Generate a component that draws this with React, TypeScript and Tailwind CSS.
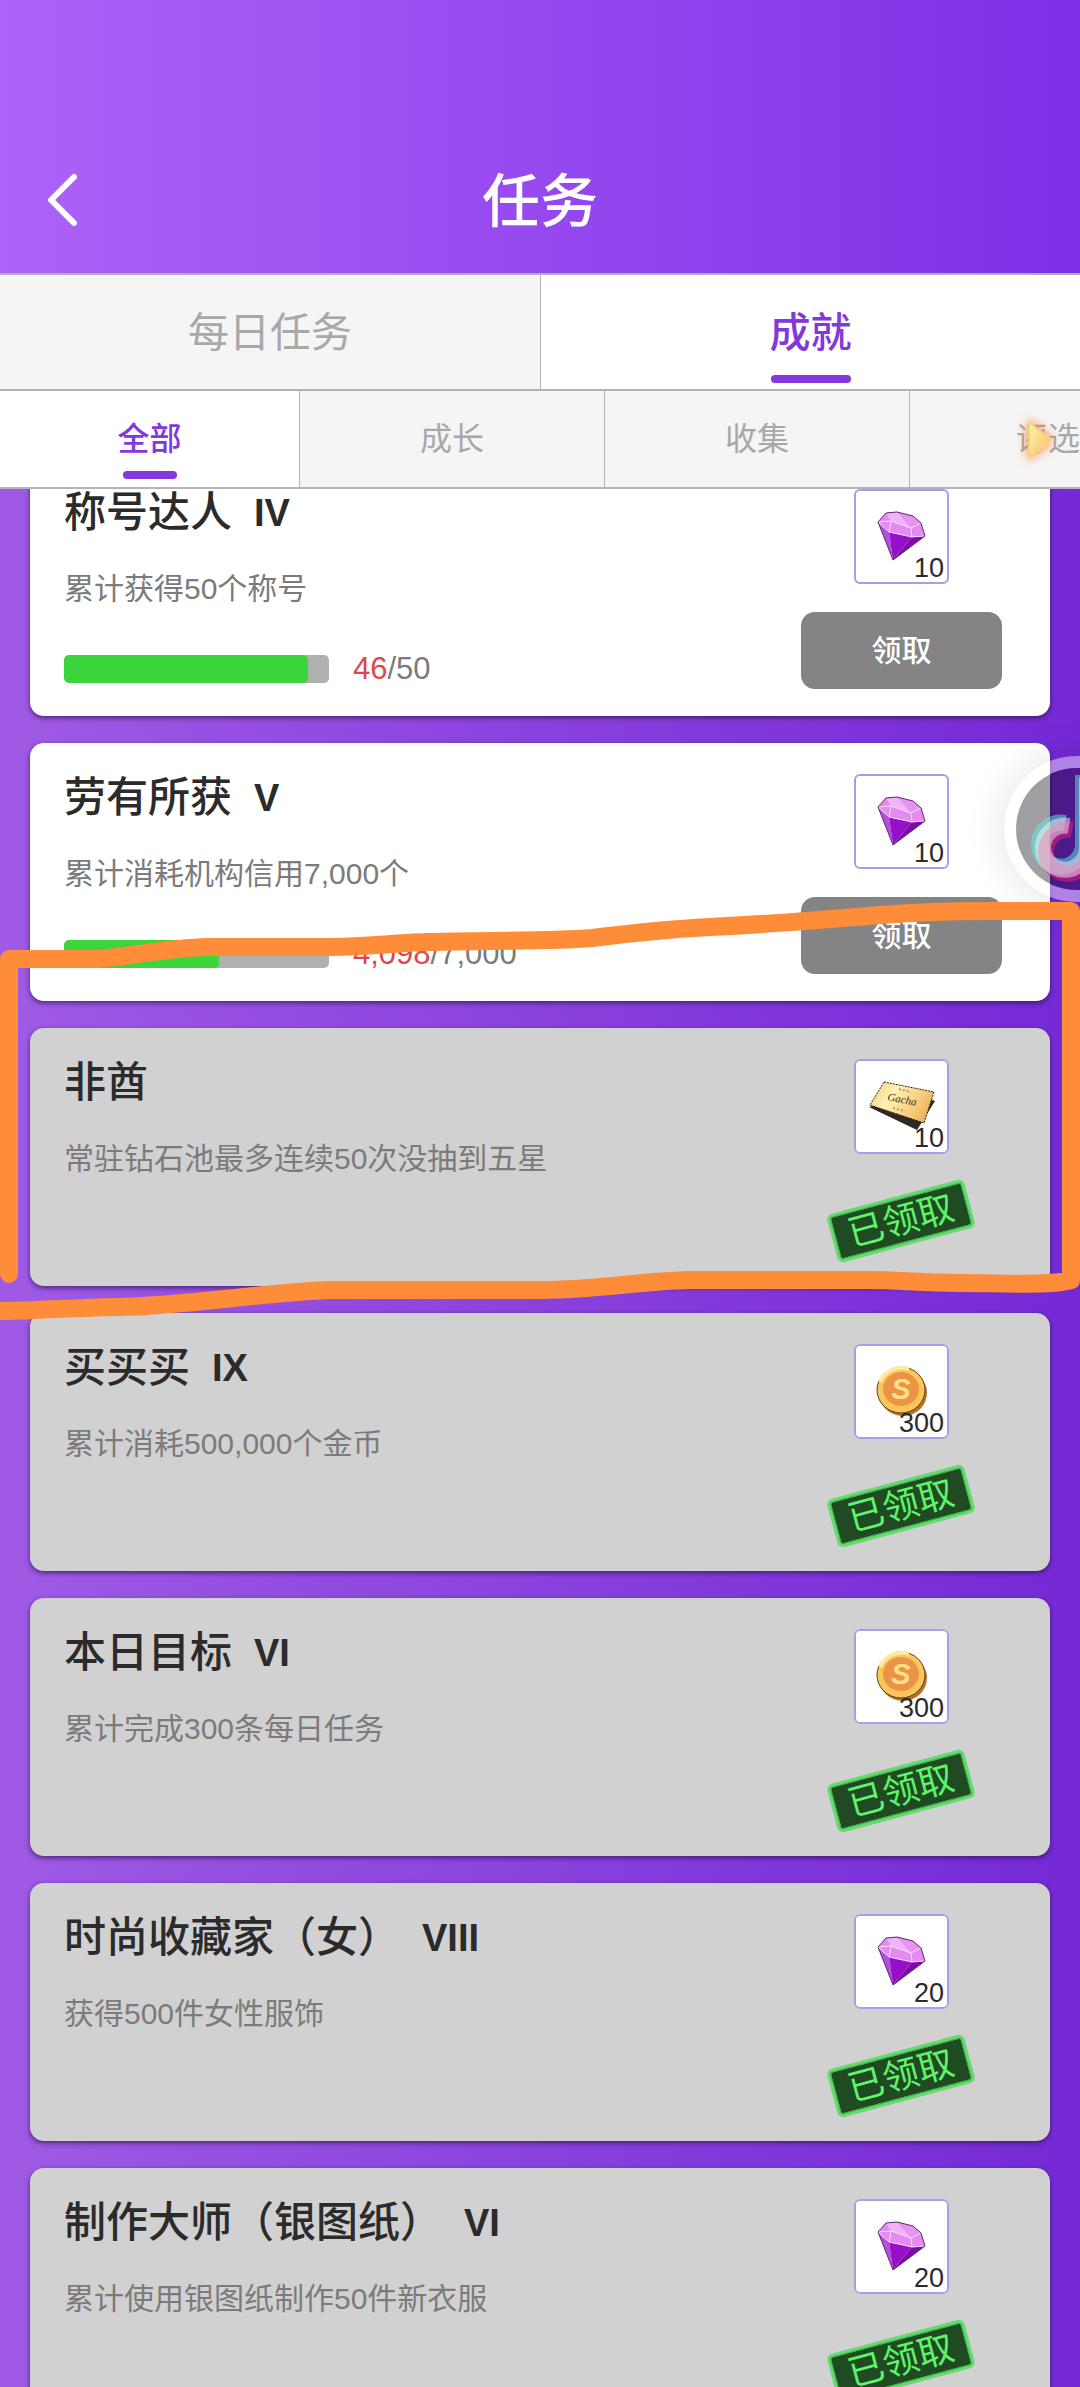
import React, { useState } from 'react';

type RewardKind = 'gem' | 'ticket' | 'coin';

interface Quest {
  name: string;
  level?: string;
  desc: string;
  reward: RewardKind;
  amount: number;
  progress?: { current: number; total: number };
}

const QUESTS: Quest[] = [
  { name: '称号达人', level: 'IV', desc: '累计获得50个称号', reward: 'gem', amount: 10, progress: { current: 46, total: 50 } },
  { name: '劳有所获', level: 'V', desc: '累计消耗机构信用7,000个', reward: 'gem', amount: 10, progress: { current: 4098, total: 7000 } },
  { name: '非酋', desc: '常驻钻石池最多连续50次没抽到五星', reward: 'ticket', amount: 10 },
  { name: '买买买', level: 'IX', desc: '累计消耗500,000个金币', reward: 'coin', amount: 300 },
  { name: '本日目标', level: 'VI', desc: '累计完成300条每日任务', reward: 'coin', amount: 300 },
  { name: '时尚收藏家（女）', level: 'VIII', desc: '获得500件女性服饰', reward: 'gem', amount: 20 },
  { name: '制作大师（银图纸）', level: 'VI', desc: '累计使用银图纸制作50件新衣服', reward: 'gem', amount: 20 },
];

const GemIcon = () => (
  <svg viewBox="0 0 95 95" className="block h-full w-full" aria-hidden="true">
    <polygon points="24,33 35,43 39,71" fill="#b44fdc" />
    <polygon points="35,43 58,48 39,71" fill="#9510c8" />
    <polygon points="58,48 71,47 39,71" fill="#7c0aa8" />
    <polygon points="24,33 32,24 43,23 59,27 67,34 71,47 58,48 35,43" fill="#e58af0" />
    <polygon points="32,24 43,23 59,27 67,34 57,39 37,32" fill="#f0b4f6" />
    <polygon points="43,23 59,27 67,34 57,39" fill="#e893f0" />
    <path d="M24 33 L37 32 L57 39 L67 34 M37 32 L35 43 M57 39 L58 48 M24 33 L35 43 L58 48 L71 47" fill="none" stroke="#fbdcfd" strokeWidth="1" />
    <polygon points="24,33 32,24 43,23 59,27 67,34 71,47 39,71" fill="none" stroke="#5b2a70" strokeWidth="1" />
  </svg>
);

const TicketIcon = () => (
  <svg viewBox="0 0 95 95" className="block h-full w-full" aria-hidden="true">
    <defs>
      <linearGradient id="ticket" x1="0" y1="0.3" x2="1" y2="0.7">
        <stop offset="0" stopColor="#f0d58a" />
        <stop offset="0.3" stopColor="#fff1b5" />
        <stop offset="0.7" stopColor="#f8cd7c" />
        <stop offset="1" stopColor="#e8ac55" />
      </linearGradient>
    </defs>
    <polygon points="15,48 63,71 81,42 60,34" fill="#2d2820" />
    <polygon points="30,23 80,33 70,64 16,46" fill="url(#ticket)" stroke="#2a2218" strokeWidth="1" strokeDasharray="2 1" />
    <text x="48" y="44" transform="rotate(11 48 41)" textAnchor="middle" fontFamily="Liberation Serif, serif" fontStyle="italic" fontSize="11" fill="#3a2c14">Gacha</text>
    <path d="M45 30 l12 3 M39 49 l12 3" stroke="#b99a5c" strokeWidth="2" strokeDasharray="2 2" />
  </svg>
);

const CoinIcon = () => (
  <svg viewBox="0 0 95 95" className="block h-full w-full" aria-hidden="true">
    <ellipse cx="49" cy="49" rx="24" ry="23" fill="#b8702a" />
    <ellipse cx="47" cy="46" rx="24" ry="23" fill="#f9c65c" stroke="#5a3c1a" strokeWidth="1" />
    <path d="M26 38 A23 22 0 0 1 55 25" fill="none" stroke="#fde9a6" strokeWidth="4" />
    <ellipse cx="47" cy="45" rx="18" ry="17" fill="#eb9347" />
    <text x="47" y="55" textAnchor="middle" fontFamily="Liberation Sans, sans-serif" fontWeight="bold" fontStyle="italic" fontSize="29" fill="#ffe08a">S</text>
  </svg>
);

const REWARD_ICONS = { gem: GemIcon, ticket: TicketIcon, coin: CoinIcon };

const Reward = ({ kind, amount }: { kind: RewardKind; amount: number }) => {
  const Icon = REWARD_ICONS[kind];
  return (
    <div className="relative h-[95px] w-[95px] rounded-md bg-white outline-2 -outline-offset-2 outline-[#a99ee6]">
      <Icon />
      <span className="absolute right-[5px] bottom-0 text-[27px] leading-8 text-[#2b2b2b]">{amount}</span>
    </div>
  );
};

const QuestCard = ({ quest }: { quest: Quest }) => {
  const { progress } = quest;
  return (
    <li className={`flex justify-between rounded-[14px] pt-[31px] pr-12 pb-[27px] pl-[34px] shadow-[0_2px_5px_rgba(50,20,80,0.75)] ${progress ? 'bg-white' : 'bg-[#d1d1d1]'}`}>
      <div className="flex flex-col">
        <h2 className="flex items-center gap-[22px] text-[42px] leading-[48px] font-medium text-[#2b2b2b]">
          <span>{quest.name}</span>
          {quest.level && <span className="text-[38px] font-bold">{quest.level}</span>}
        </h2>
        <p className="mt-8 text-[30px] leading-10 text-[#7b7b7b]">{quest.desc}</p>
        {progress && (
          <div className="mt-10 flex items-center gap-6">
            <div className="h-7 w-[265px] overflow-hidden rounded-[5px] bg-[#b0b0b0]">
              <div className="h-full rounded-[5px] bg-[#3bd63b]" style={{ width: `${(progress.current / progress.total) * 100}%` }} />
            </div>
            <span className="text-[31px] leading-10 text-[#7b7b7b]">
              <span className="text-[#e0464b]">{progress.current.toLocaleString('en-US')}</span>/{progress.total.toLocaleString('en-US')}
            </span>
          </div>
        )}
      </div>

      <div className="flex w-[201px] flex-col items-center gap-7">
        <Reward kind={quest.reward} amount={quest.amount} />
        {progress ? (
          <button className="h-[77px] w-full rounded-[14px] bg-[#848484] text-[30px] font-medium text-white">领取</button>
        ) : (
          <div className="flex h-[77px] items-center">
            <span className="block -rotate-15 rounded-md border-4 border-[#68d873] bg-[#1f4a22] px-[13px] text-[36px] leading-[42px] text-[#5ff56b] outline-1 -outline-offset-4 outline-[#35b340]">已领取</span>
          </div>
        )}
      </div>
    </li>
  );
};

const MAIN_TABS = ['每日任务', '成就'];
const SUB_TABS = ['全部', '成长', '收集', '评选'];

export default function App() {
  const [mainTab, setMainTab] = useState(1);
  const [subTab, setSubTab] = useState(0);

  return (
    <div className="relative flex h-screen flex-col overflow-hidden bg-[linear-gradient(90deg,#9f5ae5,#7429d6)] font-['Liberation_Sans','Noto_Sans_CJK_SC',sans-serif]">
      <header className="grid shrink-0 grid-cols-[1fr_auto_1fr] items-center bg-[linear-gradient(90deg,#ad63f8,#7d2fe6)] px-11 pt-[157px] pb-[26px]">
        <button aria-label="返回" className="w-fit">
          <svg viewBox="0 0 38 60" className="block h-[60px] w-[38px]" fill="none" stroke="#fff" strokeWidth="6" strokeLinecap="round" strokeLinejoin="round">
            <path d="M30 5 L7 28 L30 51" />
          </svg>
        </button>
        <h1 className="text-[58px] leading-[90px] font-medium text-white">任务</h1>
      </header>

      {/* Main tabs */}
      <nav className="grid shrink-0 grid-cols-2 border-y-2 border-[#b3b0b8]">
        {MAIN_TABS.map((label, i) => (
          <button
            key={label}
            onClick={() => setMainTab(i)}
            className={`relative h-[114px] pt-1 text-[41px] ${i > 0 ? 'border-l border-[#b5b5b5]' : ''} ${mainTab === i ? 'bg-white font-medium text-[#8338dc]' : 'bg-[#f5f5f5] text-[#a8a8a8]'}`}
          >
            {label}
            {mainTab === i && <span className="absolute bottom-1.5 left-1/2 h-2 w-20 -translate-x-1/2 rounded-sm bg-[#8338dc]" />}
          </button>
        ))}
      </nav>

      {/* Category tabs */}
      <nav className="relative flex shrink-0 overflow-hidden border-b-2 border-[#b5b5b5]">
        {SUB_TABS.map((label, i) => (
          <button
            key={label}
            onClick={() => setSubTab(i)}
            className={`relative h-24 shrink-0 text-[32px] ${i === 0 ? 'w-[299px]' : i === 3 ? 'w-[277px] border-l border-[#b5b5b5]' : 'w-[305px] border-l border-[#b5b5b5]'} ${subTab === i ? 'bg-white font-medium text-[#8338dc]' : 'bg-[#f5f5f5] text-[#a8a8a8]'}`}
          >
            {label}
            {subTab === i && <span className="absolute bottom-2 left-1/2 h-2 w-[54px] -translate-x-1/2 rounded-sm bg-[#8338dc]" />}
          </button>
        ))}
        <svg viewBox="0 0 50 60" className="pointer-events-none absolute top-[18px] right-[18px] h-[60px] w-[50px] drop-shadow-[0_0_6px_#ff7a2c]" aria-hidden="true">
          <defs>
            <linearGradient id="more" x1="0" y1="0" x2="1" y2="1">
              <stop offset="0" stopColor="#fff2bd" />
              <stop offset="1" stopColor="#f6bf55" />
            </linearGradient>
          </defs>
          <path d="M17 13 L39 31 L17 49 Z" fill="url(#more)" stroke="#fbd27c" strokeWidth="2" strokeLinejoin="round" />
        </svg>
      </nav>

      {/* Quest list, scrolled slightly past its first card */}
      <main className="min-h-0 flex-1 overflow-hidden">
        <ul className="-mt-[31px] flex flex-col gap-[27px] px-[30px]">
          {QUESTS.map((quest) => (
            <QuestCard key={quest.name} quest={quest} />
          ))}
        </ul>
      </main>

      {/* Floating app bubble */}
      <button aria-label="抖音" className="absolute top-[756px] -right-[70px] h-[146px] w-[146px] rounded-full shadow-[0_0_40px_rgba(0,0,0,0.12)]">
        <svg viewBox="0 0 146 146" className="block h-full w-full" fill="none">
          <circle cx="73" cy="73" r="67" stroke="#fff" strokeOpacity="0.42" strokeWidth="12" />
          <circle cx="73" cy="73" r="61" fill="#08000c" fillOpacity="0.38" />
          <g strokeWidth="16">
            <path d="M65 70 A22 22 0 1 0 83 92 V22" stroke="#5cf0ee" strokeOpacity="0.5" transform="translate(-4 -3)" />
            <path d="M65 70 A22 22 0 1 0 83 92 V22" stroke="#f0207a" strokeOpacity="0.5" transform="translate(3 4)" />
            <path d="M65 70 A22 22 0 1 0 83 92 V22" stroke="#fff" strokeOpacity="0.45" />
          </g>
        </svg>
      </button>

      {/* Hand-drawn marker around the third card */}
      <svg viewBox="0 0 1080 2387" className="pointer-events-none absolute top-0 left-0 h-auto w-full" fill="none" stroke="#ff8c38" strokeWidth="18" strokeLinecap="round" strokeLinejoin="round" aria-hidden="true">
        <path d="M9 1274 V959 H95 C130 957 165 948 207 947 H330 C370 947 390 943 430 942 C480 940 540 942 592 938 C640 932 670 929 710 927 C790 923 830 919 880 915 C920 912 950 911 988 911 H1071 V1280 C1050 1286 1000 1283 960 1283 C920 1283 900 1280 870 1280 H690 C640 1281 600 1290 540 1290 H330 C260 1293 180 1306 120 1307 C60 1308 30 1311 0 1311" />
      </svg>
    </div>
  );
}
